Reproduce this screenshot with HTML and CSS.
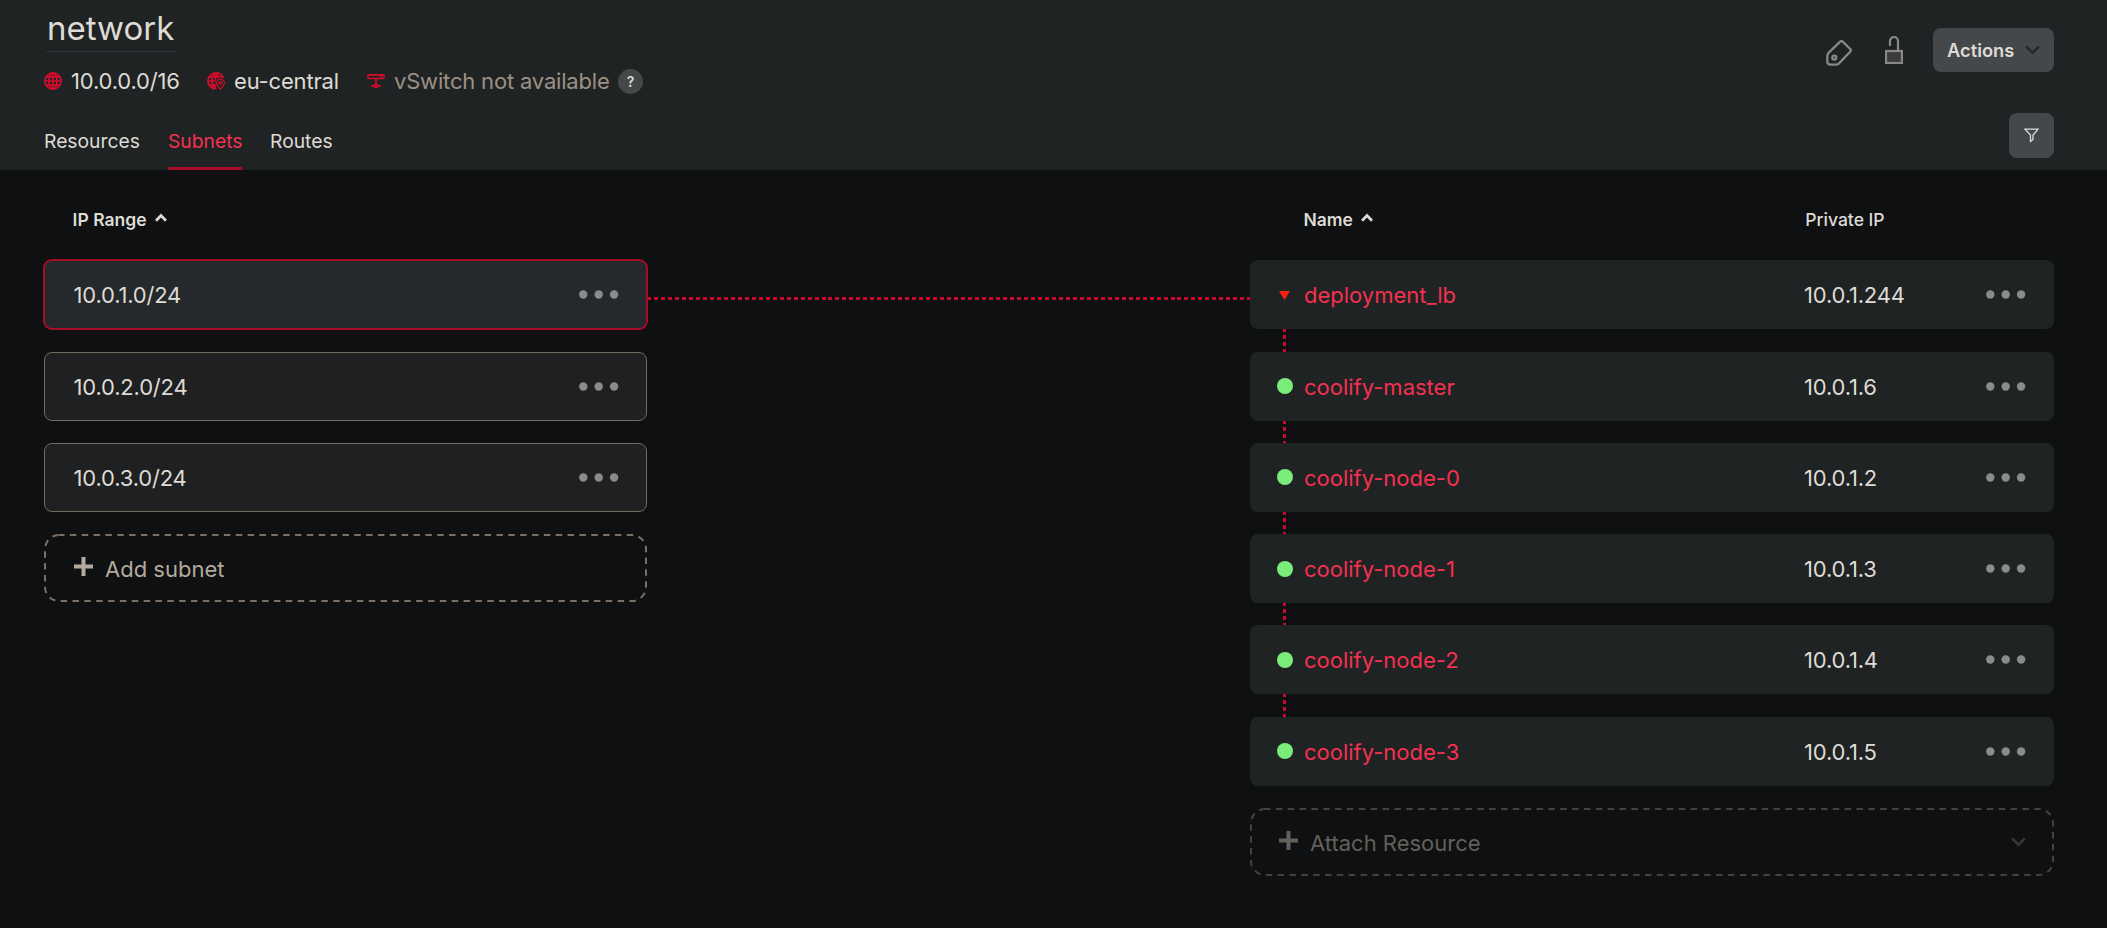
FILE: index.html
```html
<!DOCTYPE html>
<html lang="en">
<head>
<meta charset="utf-8">
<title>network</title>
<link rel="stylesheet" href="styles.css">
</head>
<body>
<svg class="defs" width="0" height="0">
  <symbol id="dots" viewBox="0 0 40 9"><circle cx="4.300" cy="4.500" r="4.200"/><circle cx="19.700" cy="4.500" r="4.200"/><circle cx="35.100" cy="4.500" r="4.200"/></symbol>
  <symbol id="plus" viewBox="0 0 19 19"><path d="M9.500 0v19M0 9.500h19"/></symbol>
  <symbol id="up" viewBox="0 0 12 9"><path d="M1 7.700l5-5.200 5 5.200"/></symbol>
  <symbol id="down" viewBox="0 0 15 10"><path d="M1.200 1.500l6.300 6.300 6.300-6.300"/></symbol>
</svg>
<header class="header">
  <div class="summary">
    <h1 class="title">network</h1>
    <div class="facts">
      <span class="fact fact-range">
        <svg class="fact-icon" viewBox="0 0 18 18"><circle cx="9" cy="9" r="8.100"/><ellipse cx="9" cy="9" rx="4" ry="8.100"/><path d="M9 1v16M1 9h16M2.500 4.800h13M2.500 13.200h13"/></svg>
        <span>10.0.0.0/16</span>
      </span>
      <span class="fact fact-zone">
        <svg class="fact-icon" viewBox="0 0 18 18"><path d="M8 17A8.100 8.100 0 1 1 16.600 6M8 17C3.800 13.500 3.800 4.500 8.500 1c1.700 1.300 2.800 3 3.300 4.800M8.500 1v16M1 9h7M2.500 4.800h12.500M2.500 13.200h6"/><path class="pin-gap" d="M13.400 17.300c-2.500-3-3.800-4.600-3.800-6.400a3.800 3.800 0 0 1 7.700 0c0 1.800-1.400 3.400-3.900 6.400z"/><path class="pin" d="M13.400 17.300c-2.500-3-3.800-4.600-3.800-6.400a3.800 3.800 0 0 1 7.700 0c0 1.800-1.400 3.400-3.900 6.400z"/><circle class="pin" cx="13.400" cy="10.800" r="1.500"/></svg>
        <span>eu-central</span>
      </span>
      <span class="fact fact-muted">
        <svg class="fact-icon" viewBox="0 0 18 18"><rect x=".9" y="2.900" width="16.200" height="3.600" rx="1.200"/><path d="M9 6.500v6M4 13.900h3.400M10.600 13.900H14M13 4.700h2"/><circle cx="9" cy="13.900" r="1.500"/></svg>
        <span>vSwitch not available</span>
      </span>
      <span class="help">?</span>
    </div>
    <nav class="tabs">
      <a class="tab tab-resources">Resources</a>
      <a class="tab tab-active">Subnets</a>
      <a class="tab">Routes</a>
    </nav>
  </div>
  <div class="tools">
    <div class="tool-row">
      <svg class="tag" viewBox="0 0 26 26"><path d="M14.200 1.600q1.300-1.100 2.600 0l7.400 7.400q1.300 1.300 0 2.700L13.400 23q-1.400 1.700-3.400 1.700H4.600Q1.300 24.600 1.300 21.300V16q0-2 1.500-3.400z"/><circle cx="8.300" cy="17.600" r="2"/></svg>
      <svg class="lock" viewBox="0 0 18 28"><path d="M5 10V5a4 4 0 0 1 8 0v10"/><rect x="1" y="15" width="16" height="12"/></svg>
      <button class="actions"><span>Actions</span><svg class="down"><use href="#down"/></svg></button>
    </div>
    <button class="filter"><svg class="funnel" viewBox="0 0 15 15"><path d="M1 1.100h13L9 7v4.500L6.500 13.500V7z"/></svg></button>
  </div>
</header>
<main class="content">
  <section class="subnets">
    <div class="heading heading-range"><span>IP Range</span><svg class="up"><use href="#up"/></svg></div>
    <div class="stack">
      <div class="row subnet selected"><span class="range">10.0.1.0/24</span><svg class="dots"><use href="#dots"/></svg></div>
      <div class="row subnet"><span class="range">10.0.2.0/24</span><svg class="dots"><use href="#dots"/></svg></div>
      <div class="row subnet"><span class="range">10.0.3.0/24</span><svg class="dots"><use href="#dots"/></svg></div>
    </div>
    <div class="add"><svg class="outline"><rect x="1" y="1" width="601" height="66" rx="14"/></svg><svg class="plus"><use href="#plus"/></svg><span class="add-label">Add subnet</span></div>
  </section>
  <div class="bridge"></div>
  <section class="resources">
    <div class="heading heading-name"><span>Name</span><svg class="up"><use href="#up"/></svg><span class="heading-ip">Private IP</span></div>
    <div class="row resource"><span class="status"><svg class="triangle" viewBox="0 0 11 9"><path d="M0 0h11L5.500 9z"/></svg></span><a class="name">deployment_lb</a><span class="ip">10.0.1.244</span><svg class="dots"><use href="#dots"/></svg></div>
    <div class="link"></div>
    <div class="row resource"><span class="status"><i class="online"></i></span><a class="name">coolify-master</a><span class="ip">10.0.1.6</span><svg class="dots"><use href="#dots"/></svg></div>
    <div class="link"></div>
    <div class="row resource"><span class="status"><i class="online"></i></span><a class="name">coolify-node-0</a><span class="ip">10.0.1.2</span><svg class="dots"><use href="#dots"/></svg></div>
    <div class="link"></div>
    <div class="row resource"><span class="status"><i class="online"></i></span><a class="name">coolify-node-1</a><span class="ip">10.0.1.3</span><svg class="dots"><use href="#dots"/></svg></div>
    <div class="link"></div>
    <div class="row resource"><span class="status"><i class="online"></i></span><a class="name">coolify-node-2</a><span class="ip">10.0.1.4</span><svg class="dots"><use href="#dots"/></svg></div>
    <div class="link"></div>
    <div class="row resource"><span class="status"><i class="online"></i></span><a class="name">coolify-node-3</a><span class="ip">10.0.1.5</span><svg class="dots"><use href="#dots"/></svg></div>
    <div class="add attach"><svg class="outline"><rect x="1" y="1" width="802" height="66" rx="14"/></svg><svg class="plus"><use href="#plus"/></svg><span class="add-label">Attach Resource</span><svg class="down"><use href="#down"/></svg></div>
  </section>
</main>
</body>
</html>
```
FILE: styles.css
```css
* { box-sizing: border-box; }
body {
  margin: 0;
  min-height: 928px;
  background: #0f1011;
  color: #dedbd5;
  font-family: Inter, "Liberation Sans", sans-serif;
  font-size: 22px;
}
svg { display: block; flex: none; fill: none; }
.defs { position: absolute; }
.header {
  height: 170px;
  padding: 0 53px 0 44px;
  background: #202324;
  display: flex;
  justify-content: space-between;
}
.summary { display: flex; flex-direction: column; align-items: flex-start; }
.title {
  margin: 0 0 0 2px;
  width: 129px;
  height: 52px;
  padding: 5px 0 0 1px;
  border-bottom: 1px dotted #44484a;
  font-size: 33px;
  font-weight: 400;
  line-height: 46px;
  white-space: nowrap;
}
.facts { height: 58px; display: flex; align-items: center; white-space: nowrap; letter-spacing: -0.180px; }
.fact { display: flex; align-items: center; gap: 9px; }
.fact-range { width: 163px; }
.fact-zone { width: 160px; }
.fact-muted { width: 251px; color: #9c9184; }
.fact-icon { width: 18px; height: 18px; stroke: #d50c2d; stroke-width: 1.700; }
.fact-icon .pin-gap { stroke: #202324; fill: #202324; stroke-width: 3; }
.fact-icon .pin { stroke-width: 1.200; }
.help {
  width: 25px;
  height: 25px;
  border-radius: 50%;
  background: #444849;
  font-size: 14px;
  font-weight: 600;
  line-height: 25px;
  text-align: center;
}
.tabs { display: flex; gap: 28px; height: 60px; font-size: 19.300px; line-height: 63px; }
.tab { display: block; height: 60px; }
.tab-resources { width: 96px; }
.tab-active { width: 74px; color: #f4314f; border-bottom: 3px solid #a90c25; }
.tools { display: flex; flex-direction: column; align-items: flex-end; padding-top: 28px; }
.tool-row { display: flex; align-items: flex-start; height: 85px; stroke: #888; }
.tag { width: 26px; height: 26px; margin: 12px 33px 0 0; stroke-width: 2.300; }
.lock { width: 18px; height: 28px; margin: 8px 30px 0 0; stroke-width: 2.200; }
.lock rect { fill: #3b3b3b; }
button { border: 0; padding: 0; border-radius: 8px; background: #44484b; color: #dedbd5; font-family: inherit; }
.actions {
  width: 121px;
  height: 44px;
  padding: 0 14px;
  display: flex;
  align-items: center;
  justify-content: space-between;
  font-size: 18.300px;
  font-weight: 600;
}
.actions span { stroke: none; margin-top: -1px; }
.down { width: 15px; height: 10px; stroke: #242829; stroke-width: 2.500; }
.filter { width: 45px; height: 45px; display: grid; place-items: center; }
.funnel { width: 15px; height: 15px; stroke: #dedbd5; stroke-width: 1.300; }
.content { display: flex; padding: 0 53px 0 44px; }
.subnets { width: 603px; }
.resources { width: 804px; }
.heading {
  height: 90.250px;
  padding-top: 18px;
  display: flex;
  align-items: flex-start;
  font-size: 17.500px;
  font-weight: 600;
  line-height: 64px;
}
.heading-range { padding-left: 28.600px; }
.heading-name { padding-left: 53.400px; }
.up { width: 12px; height: 9px; margin: 25px 0 0 8.500px; stroke: #dedbd5; stroke-width: 2.700; }
.heading-ip { margin-left: 432px; font-weight: 500; }
.stack { display: flex; flex-direction: column; gap: 22.300px; }
.row { height: 69px; border-radius: 8px; background: #202324; display: flex; align-items: center; }
.range, .name, .ip { margin-top: 1px; }
.subnet { border: 1px solid #736a5f; padding: 0 28px; justify-content: space-between; background: #1f2021; letter-spacing: -0.180px; }
.range { margin-left: 0.500px; }
.selected { border-color: #a90c25; box-shadow: 0 0 0 1px #a90c25; background: #25292b; }
.dots { width: 40px; height: 9px; fill: #8c8b8b; }
.subnet .dots { margin-right: -1px; }
.bridge {
  width: 602px;
  margin: 127px 0 0 1px;
  height: 3px;
  background: repeating-linear-gradient(90deg, #c50c2d 0 3px, transparent 3px 5.980px, #c50c2d 5.980px 6.980px);
}
.status { width: 54px; padding-left: 27px; }
.triangle { width: 11px; height: 9px; margin-left: 1.500px; margin-top: 1px; fill: #fb1c12; }
.online { display: block; width: 16px; height: 16px; border-radius: 50%; background: #79ec79; }
.name { width: 500px; color: #f4314f; }
.ip { width: 182px; letter-spacing: -0.180px; }
.link {
  width: 3px;
  height: 22.300px;
  margin-left: 33px;
  background: repeating-linear-gradient(180deg, #c50c2d 0 3px, transparent 3px 6px, #c50c2d 6px 7px);
}
.add {
  position: relative;
  height: 68px;
  margin-top: 22px;
  padding: 0 28px 0 30px;
  display: flex;
  align-items: center;
  color: #b3aa9e;
}
.outline {
  position: absolute;
  inset: 0;
  width: 100%;
  height: 100%;
  stroke: #7a7064;
  stroke-width: 2;
  stroke-dasharray: 6.500 5.350;
  stroke-dashoffset: 1;
}
.add .plus { width: 19px; height: 19px; stroke: #b3a99e; stroke-width: 4; margin-bottom: 2px; }
.add-label { margin: 2px 0 0 12px; }
.attach { color: #63605b; padding-left: 29px; }
.attach .outline { stroke: #45423d; }
.attach .plus { stroke: #63605b; }
.attach .down { margin-left: auto; stroke: #363738; }
```
